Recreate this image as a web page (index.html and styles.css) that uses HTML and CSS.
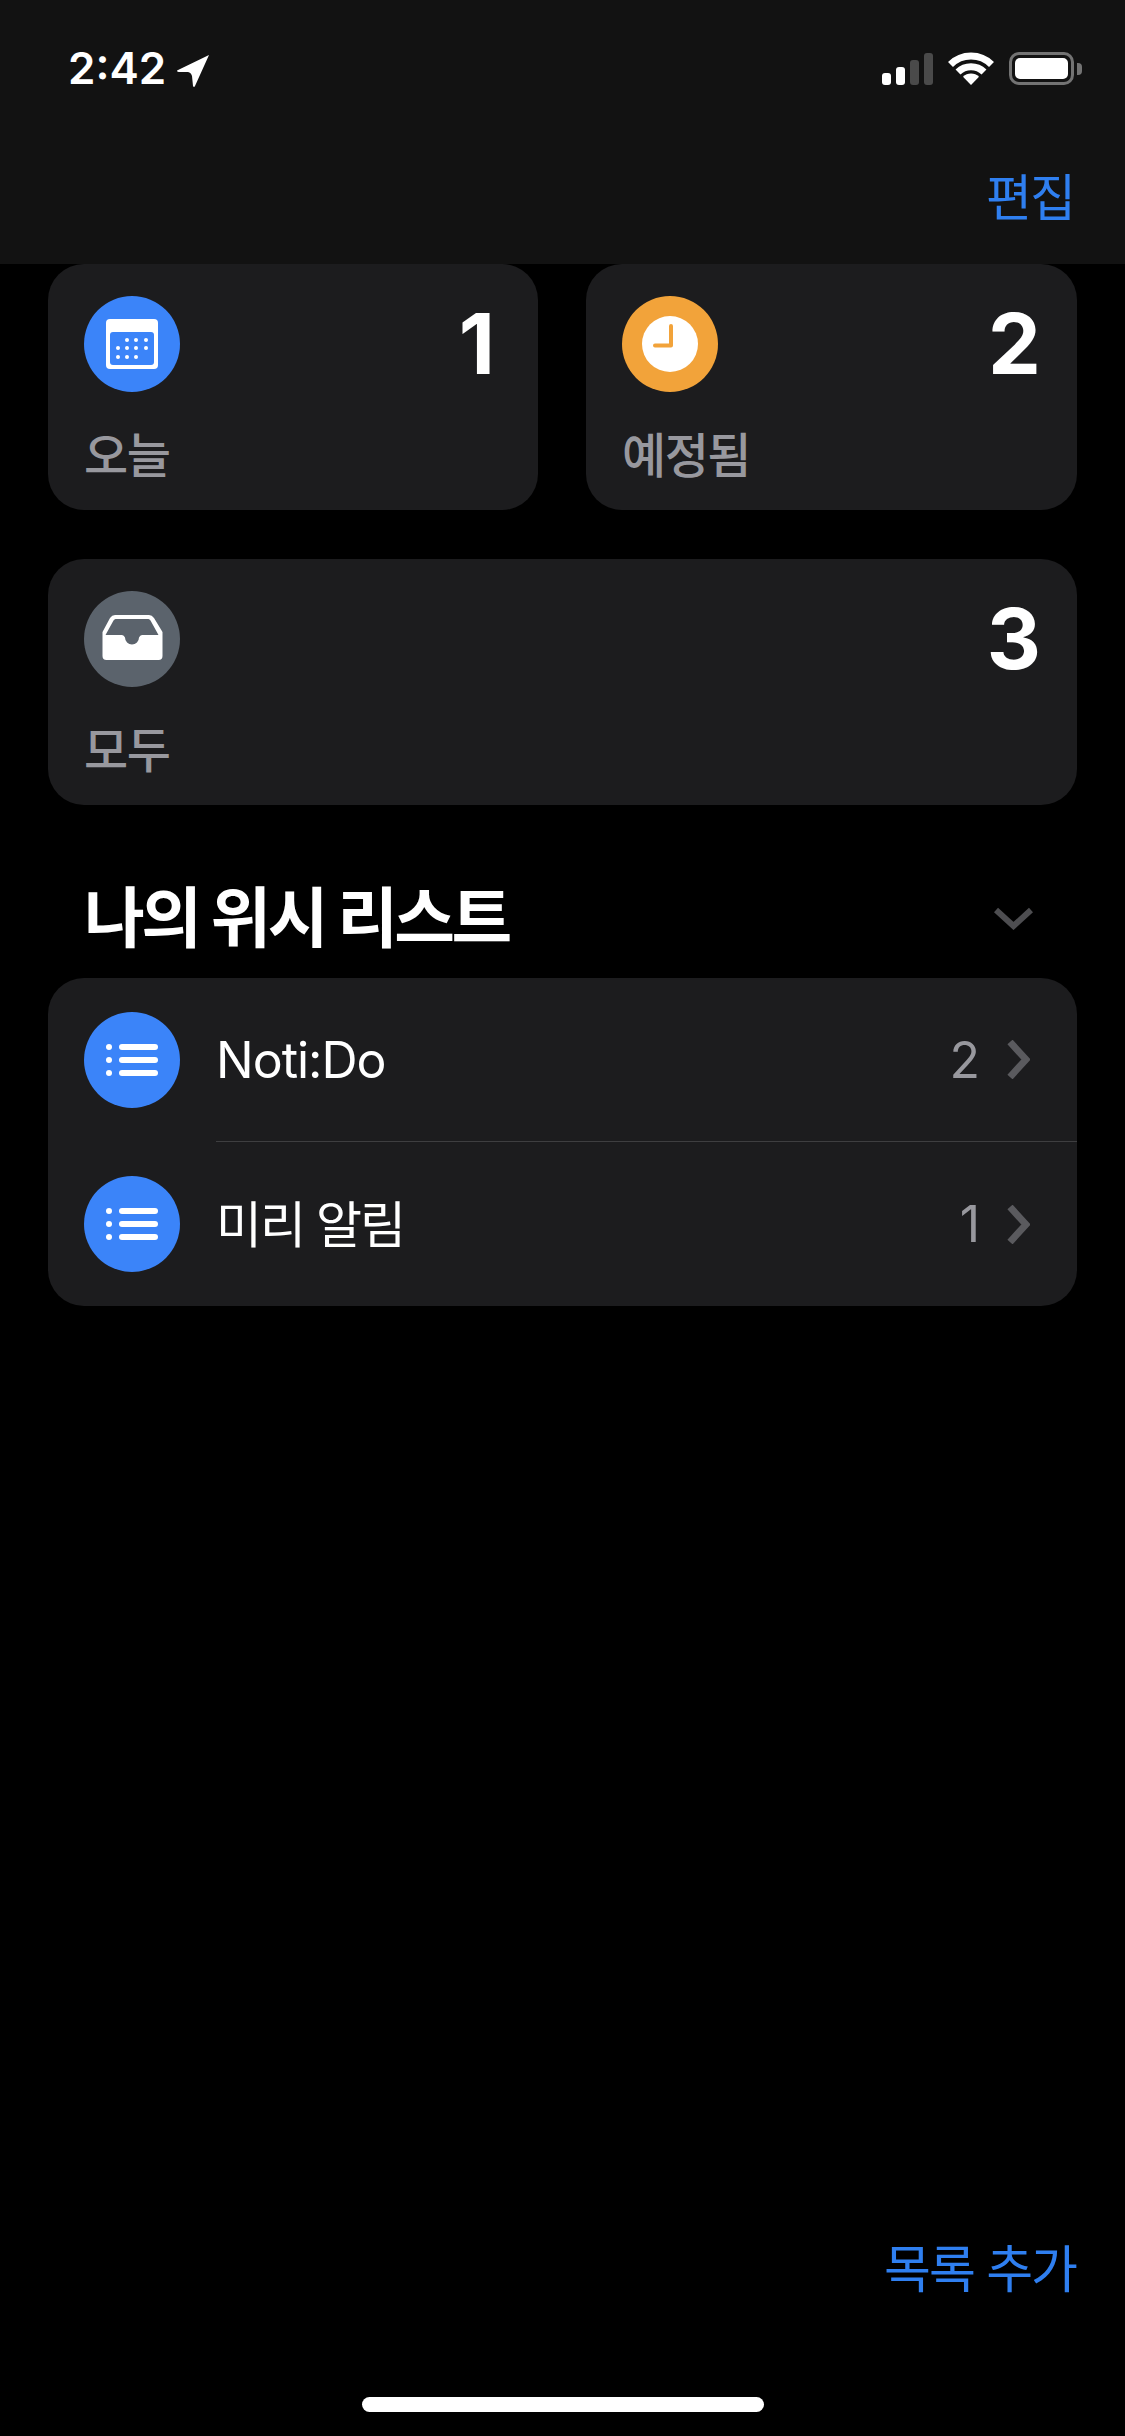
FILE: index.html
```html
<!DOCTYPE html>
<html lang="ko">
<head>
<meta charset="UTF-8">
<title>미리 알림</title>
<link rel="stylesheet" href="styles.css">
</head>
<body>
	<header class="top">
		<div class="status">
			<div class="status-left">
				<span class="time">2:42</span>
				<svg class="arrow" width="32" height="32" viewBox="0 0 32 32"><path d="M32 0 L0 15.500 Q0 17 2 17 L11 17 Q14 17.500 15 21 L16 31 Q17 33 18 31 Z" fill="#fff"/></svg>
			</div>
			<div class="status-right">
				<div class="signal">
					<i class="bar bar1"></i><i class="bar bar2"></i><i class="bar bar3"></i><i class="bar bar4"></i>
				</div>
				<svg class="wifi" width="46" height="33" viewBox="0 0 46 33">
					<path d="M2.500 12.500 A29 29 0 0 1 43.500 12.500" fill="none" stroke="#fff" stroke-width="7"/>
					<path d="M10 20 A18.500 18.500 0 0 1 36 20" fill="none" stroke="#fff" stroke-width="7"/>
					<path d="M23 33 L15 24.800 A11.500 11.500 0 0 1 31 24.800 Z" fill="#fff"/>
				</svg>
				<div class="battery">
					<div class="battery-body"><div class="battery-fill"></div></div>
					<div class="battery-cap"></div>
				</div>
			</div>
		</div>
		<div class="nav"><a class="link">편집</a></div>
	</header>

	<main class="content">
		<section class="tiles">
			<div class="tile">
				<div class="tile-top">
					<svg class="circle" viewBox="0 0 96 96">
						<circle cx="48" cy="48" r="48" fill="#3b84f9"/>
						<rect x="22" y="23" width="52" height="50" rx="4" fill="#fff"/>
						<rect x="26" y="36" width="44" height="33" rx="3" fill="#3b84f9"/>
						<g fill="#fff">
							<circle cx="43" cy="44" r="2"/><circle cx="52" cy="44" r="2"/><circle cx="62" cy="44" r="2"/>
							<circle cx="34" cy="52" r="2"/><circle cx="43" cy="52" r="2"/><circle cx="52" cy="52" r="2"/><circle cx="62" cy="52" r="2"/>
							<circle cx="34" cy="61" r="2"/><circle cx="43" cy="61" r="2"/><circle cx="52" cy="61" r="2"/>
						</g>
					</svg>
					<span class="num num-one">1</span>
				</div>
				<div class="tile-label">오늘</div>
			</div>
			<div class="tile">
				<div class="tile-top">
					<svg class="circle" viewBox="0 0 96 96">
						<circle cx="48" cy="48" r="48" fill="#f2a33a"/>
						<circle cx="48" cy="48" r="28" fill="#fff"/>
						<path d="M49 30 V49.500 H33" fill="none" stroke="#f2a33a" stroke-width="4" stroke-linecap="round" stroke-linejoin="round"/>
					</svg>
					<span class="num">2</span>
				</div>
				<div class="tile-label">예정됨</div>
			</div>
			<div class="tile tile-wide">
				<div class="tile-top">
					<svg class="circle" viewBox="0 0 96 96">
						<circle cx="48" cy="48" r="48" fill="#5b636c"/>
						<path fill="#fff" fill-rule="evenodd" d="M31 24 H65 Q68 24 70 27 L78.500 41 V65 Q78.500 69 74.500 69 H22.500 Q18.500 69 18.500 65 V41 L26 27 Q28 24 31 24 Z M31.500 28 H64.500 Q65.500 28 66.500 29.500 L74.500 44 H58 Q56 44 55 46.500 A7 7 0 0 1 41 46.500 Q40 44 38 44 H21.500 L29.500 29.500 Q30.500 28 31.500 28 Z"/>
					</svg>
					<span class="num">3</span>
				</div>
				<div class="tile-label">모두</div>
			</div>
		</section>

		<div class="section-head">
			<h2 class="section-title">나의 위시 리스트</h2>
			<svg class="chev-down" width="39" height="23" viewBox="0 0 39 23"><path d="M2 3 L19.500 19 L37 3" fill="none" stroke="#4d4d50" stroke-width="6"/></svg>
		</div>

		<section class="list">
			<div class="row">
				<svg class="circle row-icon" viewBox="0 0 96 96">
					<circle cx="48" cy="48" r="48" fill="#3b84f9"/>
					<g fill="#fff">
						<circle cx="25" cy="35" r="3"/><circle cx="25" cy="48" r="3"/><circle cx="25" cy="61" r="3"/>
						<rect x="35" y="32" width="39" height="6" rx="3"/><rect x="35" y="45" width="39" height="6" rx="3"/><rect x="35" y="58" width="39" height="6" rx="3"/>
					</g>
				</svg>
				<div class="row-body">
					<span class="row-name">Noti:Do</span>
					<span class="row-count">2</span>
					<svg class="chev-right" width="23" height="39" viewBox="0 0 23 39"><path d="M3 2 L19 19.500 L3 37" fill="none" stroke="#5a5a5e" stroke-width="7"/></svg>
				</div>
			</div>
			<div class="row">
				<svg class="circle row-icon" viewBox="0 0 96 96">
					<circle cx="48" cy="48" r="48" fill="#3b84f9"/>
					<g fill="#fff">
						<circle cx="25" cy="35" r="3"/><circle cx="25" cy="48" r="3"/><circle cx="25" cy="61" r="3"/>
						<rect x="35" y="32" width="39" height="6" rx="3"/><rect x="35" y="45" width="39" height="6" rx="3"/><rect x="35" y="58" width="39" height="6" rx="3"/>
					</g>
				</svg>
				<div class="row-body">
					<span class="row-name row-name-ko">미리 알림</span>
					<span class="row-count">1</span>
					<svg class="chev-right" width="23" height="39" viewBox="0 0 23 39"><path d="M3 2 L19 19.500 L3 37" fill="none" stroke="#5a5a5e" stroke-width="7"/></svg>
				</div>
			</div>
		</section>
	</main>

	<footer class="bottom">
		<a class="link add-list">목록 추가</a>
		<div class="home-bar"></div>
	</footer>
</body>
</html>
```

FILE: styles.css
```css
* {
	box-sizing: border-box;
}
body {
	margin: 0;
	width: 1125px;
	height: 2436px;
	overflow: hidden;
	display: flex;
	flex-direction: column;
	background: #000;
	color: #fff;
	font-family: "Inter", "Noto Sans CJK KR", sans-serif;
}
.link {
	color: #2f7ff0;
	font-size: 50px;
	line-height: 60px;
	letter-spacing: -2px;
}

/* top bar */
.top {
	height: 264px;
	background: #121212;
	flex-shrink: 0;
}
.status {
	display: flex;
	justify-content: space-between;
	padding: 52px 43px 0 68px;
	height: 100px;
}
.status-left {
	display: flex;
	align-items: flex-start;
	gap: 11px;
}
.time {
	font-size: 44px;
	font-weight: 600;
	line-height: 33px;
}
.arrow {
	margin-top: 3px;
}
.status-right {
	display: flex;
	align-items: flex-start;
}
.signal {
	display: flex;
	align-items: flex-end;
	gap: 5px;
	height: 33px;
	margin-right: 15px;
}
.bar {
	display: block;
	width: 9px;
	border-radius: 3px;
	background: #fff;
}
.bar1 { height: 12px; }
.bar2 { height: 18px; }
.bar3 { height: 25px; background: #4a4a4a; }
.bar4 { height: 32px; background: #4a4a4a; }
.battery {
	display: flex;
	align-items: center;
	margin-left: 15px;
	height: 33px;
}
.battery-body {
	width: 65px;
	height: 33px;
	border: 3px solid #737373;
	border-radius: 10px;
	padding: 3px;
}
.battery-fill {
	height: 100%;
	background: #fff;
	border-radius: 5px;
}
.battery-cap {
	width: 5px;
	height: 12px;
	margin-left: 3px;
	background: #737373;
	border-radius: 0 4px 4px 0;
}
.nav {
	display: flex;
	justify-content: flex-end;
	padding: 68px 51px 0 0;
}

/* tiles */
.content {
	flex: 1;
	padding: 0 48px;
}
.tiles {
	display: grid;
	grid-template-columns: 490px 491px;
	gap: 49px 48px;
}
.tile {
	height: 246px;
	padding: 32px 36px 0;
	background: #1c1c1e;
	border-radius: 36px;
}
.tile-wide {
	grid-column: span 2;
}
.tile-top {
	display: flex;
	justify-content: space-between;
	align-items: flex-start;
}
.circle {
	display: block;
	width: 96px;
	height: 96px;
	flex-shrink: 0;
}
.num {
	font-size: 84px;
	font-weight: 700;
	line-height: 96px;
}
.num-one {
	margin-right: 7px;
}
.tile-label {
	margin-top: 36px;
	font-size: 48px;
	font-weight: 500;
	line-height: 56px;
	letter-spacing: -1.500px;
	color: #98989e;
}

/* list */
.section-head {
	display: flex;
	justify-content: space-between;
	align-items: center;
	padding: 53px 44px 0 36px;
	height: 173px;
}
.section-title {
	margin: 0;
	font-size: 66px;
	font-weight: 700;
	line-height: 80px;
	letter-spacing: -3.500px;
}
.list {
	background: #1c1c1e;
	border-radius: 36px;
	padding-left: 36px;
}
.row {
	display: flex;
}
.row-icon {
	margin: 34px 36px 33px 0;
}
.row + .row .row-icon {
	margin: 35px 36px 34px 0;
}
.row-body {
	flex: 1;
	display: flex;
	align-items: center;
	padding-right: 47px;
	font-size: 50px;
}
.row + .row .row-body {
	border-top: 1px solid #3e3e40;
}
.row-name {
	flex: 1;
	font-weight: 400;
	letter-spacing: -1px;
}
.row-name-ko {
	letter-spacing: -2px;
	margin-top: -7px;
}
.row-count {
	color: #98989e;
	margin-right: 27px;
}
.chev-right {
	flex-shrink: 0;
}

/* bottom */
.bottom {
	display: flex;
	flex-direction: column;
	flex-shrink: 0;
}
.add-list {
	align-self: flex-end;
	margin-right: 49px;
	margin-bottom: 97px;
	font-size: 51px;
}
.home-bar {
	align-self: center;
	width: 402px;
	height: 15px;
	margin-bottom: 24px;
	background: #fff;
	border-radius: 8px;
}
```
